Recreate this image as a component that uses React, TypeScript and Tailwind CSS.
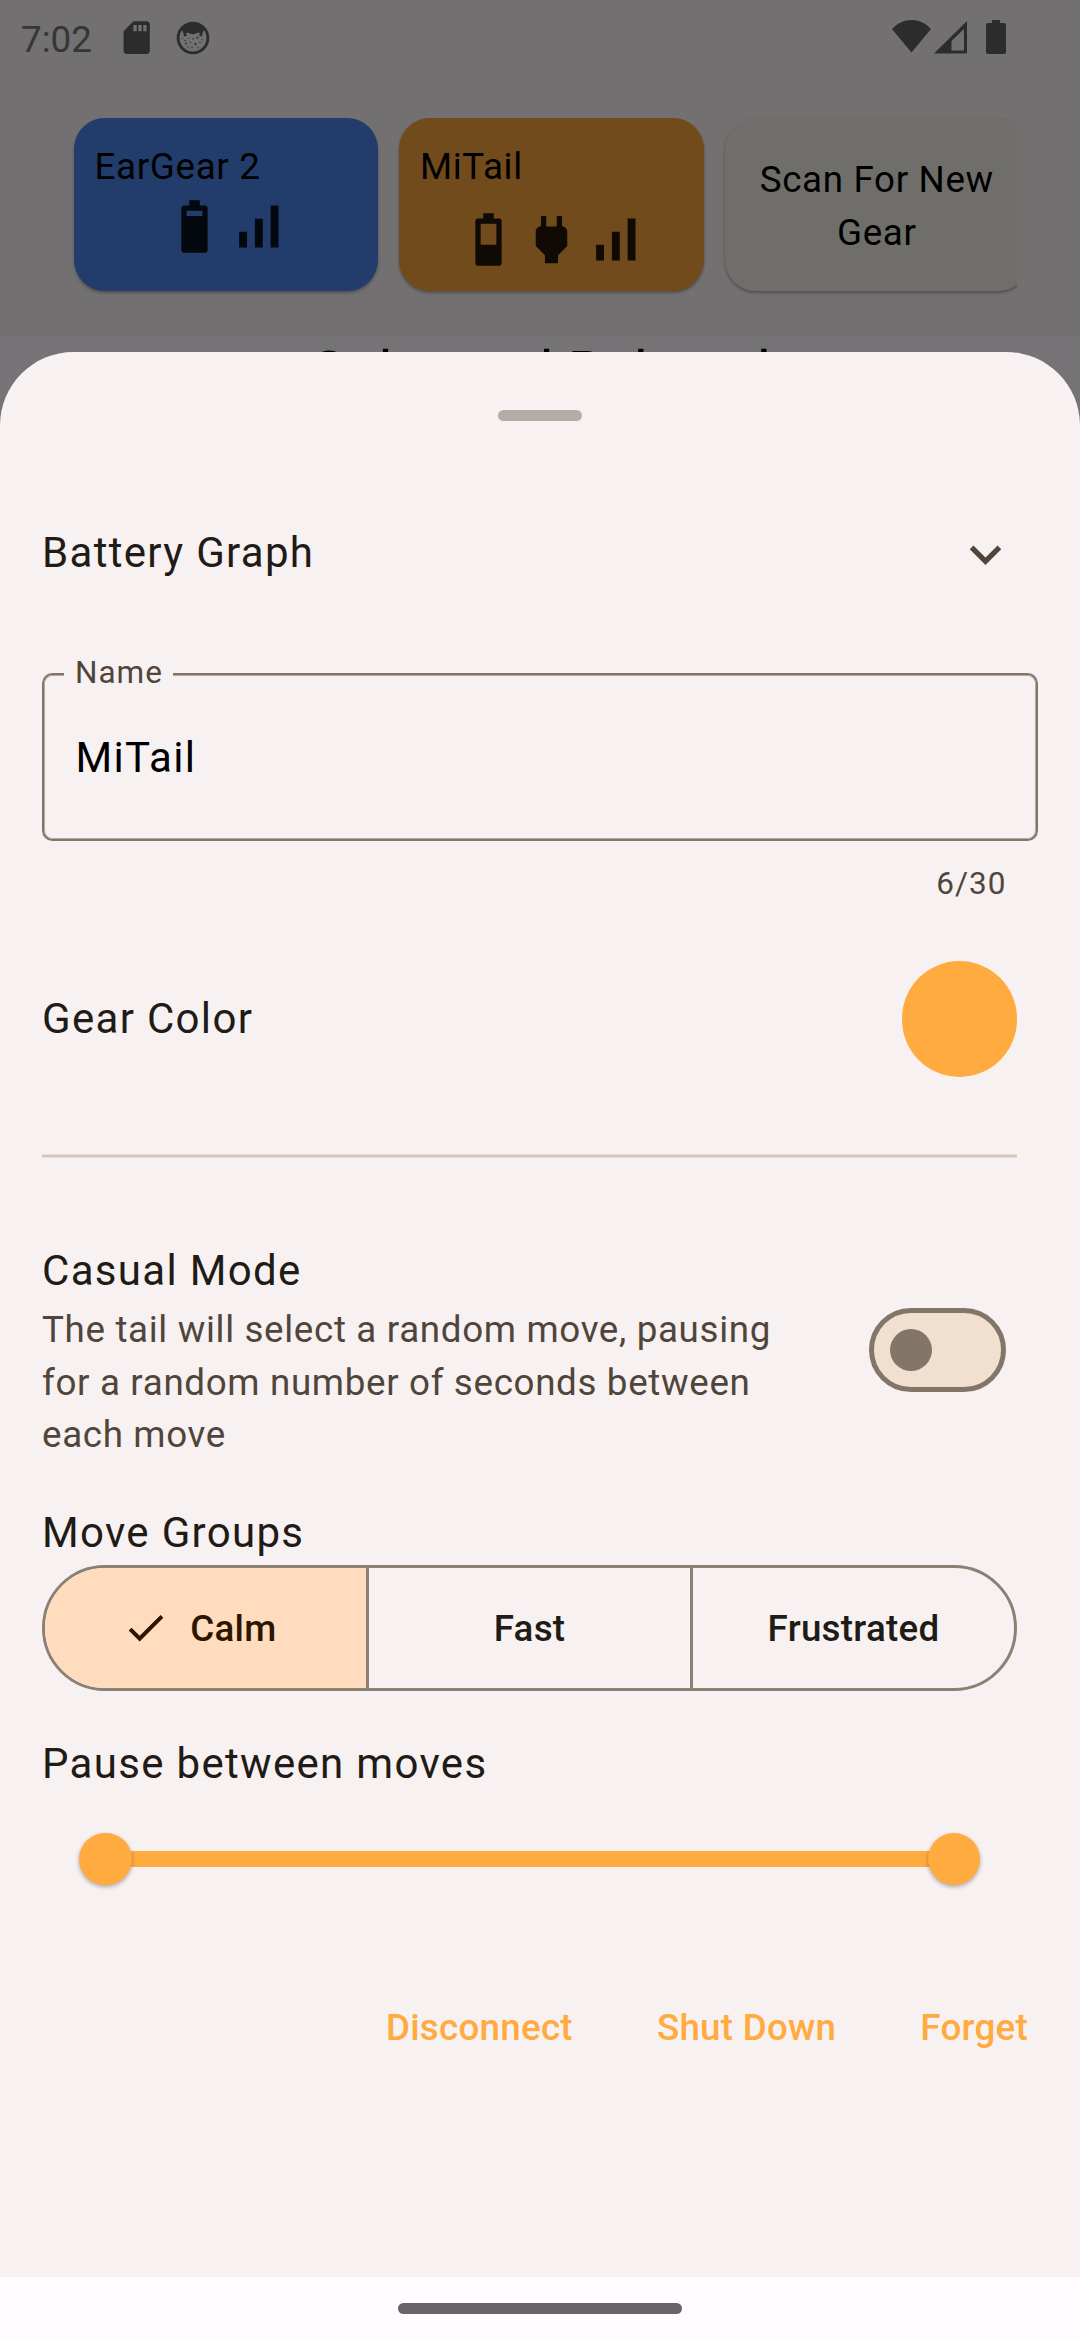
import type { ReactNode } from "react";

const BATTERY_BODY =
  "M17 5v16c0 .55-.45 1-1 1H8c-.55 0-1-.45-1-1V5c0-.55.45-1 1-1h2V2h4v2h2c.55 0 1 .45 1 1z";

function GearIcon({ d, className }: { d: string; className: string }) {
  return (
    <svg viewBox="0 0 24 24" className={`size-[63px] ${className}`} fill="currentColor" fillRule="evenodd">
      <path d={d} />
    </svg>
  );
}

const ICONS = {
  batteryHigh: `${BATTERY_BODY}M15 6H9v2h6V6z`,
  batteryMid: `${BATTERY_BODY}M15 6H9v8h6V6z`,
  power:
    "M16.01 7L16 3h-2v4h-4V3H8v4h-.01C7 6.99 6 7.99 6 8.99v5.49L9.5 18v3h5v-3l3.5-3.51v-5.5c0-1-1-2-1.99-1.99z",
  signal: "M17 4h3v16h-3zM5 14h3v6H5zM11 9h3v11h-3z",
};

function StatusBar() {
  return (
    <div className="flex h-[118px] items-start justify-between pl-[21px] pr-[74px] text-[#2c2c2c]">
      <div className="flex items-start">
        <span className="mt-[18px] w-[96px] text-[36.75px] leading-[44px] text-[#363636]">7:02</span>
        <svg viewBox="0 0 24 24" className="mt-[18px] size-[39.4px]" fill="currentColor" fillRule="evenodd">
          <path d="M18 2h-8L4 8v12c0 1.1.9 2 2 2h12c1.1 0 2-.9 2-2V4c0-1.1-.9-2-2-2zM12 4.200h-2V8h2zM15 4.200h-2V8h2zM18 4.200h-2V8h2z" />
        </svg>
        <svg viewBox="0 0 34 34" className="ml-[20px] mt-[21px] size-[34px]">
          <circle cx="17" cy="17" r="14.9" fill="none" stroke="#2c2c2c" strokeWidth="2.8" />
          <path
            d="M5.500 9C9 0.500 25 0.500 28.500 9L26.800 11L26 15.500L23 14.800L24 12.500L22 11.500C19 13.800 15 13.800 12 11.500L10 12.500L11 14.800L8 15.500L7.200 11Z"
            fill="#2c2c2c"
          />
          <g fill="#3a3939">
            <circle cx="6.500" cy="17.500" r="0.6" />
            <circle cx="9" cy="19.500" r="0.8" />
            <circle cx="13" cy="17.500" r="0.6" />
            <circle cx="17" cy="18" r="0.8" />
            <circle cx="21.500" cy="16.800" r="1.1" />
            <circle cx="26" cy="18.500" r="0.7" />
            <circle cx="10" cy="22.500" r="1.1" />
            <circle cx="14.500" cy="21.500" r="0.8" />
            <circle cx="19.500" cy="23" r="1.2" />
            <circle cx="24" cy="21.500" r="0.8" />
            <circle cx="12" cy="26" r="0.7" />
            <circle cx="16" cy="26.500" r="0.8" />
            <circle cx="22" cy="26.500" r="0.7" />
          </g>
        </svg>
      </div>
      <div className="flex items-start pt-[20px]">
        <svg viewBox="0 0 39 33" className="h-[33px] w-[39px]" fill="currentColor">
          <path d="M19.500 32.500L0 9C11 -3 28 -3 39 9Z" />
        </svg>
        <svg viewBox="0 0 33 33" className="ml-[3px] mt-[1px] h-[33px] w-[33px]" fill="currentColor" fillRule="evenodd">
          <path d="M33 0V32.500H0ZM30 8L17.500 20V29.500H30Z" />
        </svg>
        <svg viewBox="0 0 20 34" className="ml-[19px] h-[34px] w-[20px]" fill="currentColor">
          <path d="M6 0h8v3h4a2 2 0 0 1 2 2v27a2 2 0 0 1-2 2H2a2 2 0 0 1-2-2V5a2 2 0 0 1 2-2h4z" />
        </svg>
      </div>
    </div>
  );
}

function GearCard({ name, className, children }: { name: string; className: string; children: ReactNode }) {
  return (
    <div
      className={`flex h-[173px] w-[304.5px] shrink-0 flex-col rounded-[31px] pt-[22px] shadow-[0_2px_3px_rgba(0,0,0,0.3)] ${className}`}
    >
      <div className="pl-[21px] text-[36.75px] leading-[53px] tracking-[0.656px] text-black">{name}</div>
      {children}
    </div>
  );
}

function Backdrop() {
  return (
    <div className="h-[500px] bg-[#757375]">
      <div className="h-[337px] bg-[#737071]">
        <StatusBar />
        <div className="mr-[63px] flex h-[190px] gap-[21px] overflow-hidden pl-[73.5px]">
          <GearCard name="EarGear 2" className="bg-[#223d6c]">
            <div className="mt-[2px] flex justify-center">
              <GearIcon d={ICONS.batteryHigh} className="text-[#03070e]" />
              <GearIcon d={ICONS.signal} className="text-[#03070e]" />
            </div>
          </GearCard>
          <GearCard name="MiTail" className="bg-[#724b1c]">
            <div className="mt-[15px] flex justify-center">
              <GearIcon d={ICONS.batteryMid} className="text-[#0f0a03]" />
              <GearIcon d={ICONS.power} className="text-[#0f0a03]" />
              <GearIcon d={ICONS.signal} className="text-[#0f0a03]" />
            </div>
          </GearCard>
          <div className="flex h-[173px] w-[304.5px] shrink-0 items-center justify-center rounded-[31px] bg-[#6f6e6b] px-[21px] pt-[2px] text-center text-[36.75px] leading-[53px] tracking-[0.656px] text-black shadow-[0_2px_3px_rgba(0,0,0,0.3)]">
            Scan For New Gear
          </div>
        </div>
      </div>
      <div className="text-center text-[57.75px] leading-[70px] text-black">Calm and Relaxed</div>
    </div>
  );
}

function NameField() {
  return (
    <div className="mx-[42px] mt-[87px] flex flex-col">
      <div className="relative flex h-[168px] items-center rounded-[10.5px] border-2 border-[#837568] pl-[31.5px] shadow-[inset_0_0_0_1px_#b3aaa1]">
        <span className="absolute left-[20px] top-[-23px] w-[109px] bg-[#f8f1f1] pl-[11px] text-[31.5px] leading-[42px] tracking-[1px] text-[#50453a]">
          Name
        </span>
        <span className="text-[42px] leading-[63px] tracking-[1.3125px] text-black">MiTail</span>
      </div>
      <div className="mt-[22px] pr-[31.5px] text-right text-[31.5px] leading-[42px] tracking-[1.05px] text-[#50453a]">
        6/30
      </div>
    </div>
  );
}

function MoveGroups() {
  return (
    <div className="flex h-[126px] overflow-hidden rounded-full border-3 border-[#8c7f73] text-[36.75px] font-medium leading-[53px] tracking-[0.2625px] text-[#1f1b16]">
      <div className="flex w-[321px] items-center bg-[#fedcbd] pl-[77px] text-[#2c1600]">
        <svg viewBox="0 0 24 24" className="size-[47.25px]" fill="currentColor">
          <path d="M9 16.170L4.830 12l-1.420 1.410L9 19 21 7l-1.410-1.410z" />
        </svg>
        <span className="ml-[21px] pt-[2px]">Calm</span>
      </div>
      <div className="flex flex-1 items-center justify-center border-x-3 border-[#8c7f73] pt-[2px]">Fast</div>
      <div className="flex w-[321px] items-center justify-center pt-[2px]">Frustrated</div>
    </div>
  );
}

function PauseSlider() {
  return (
    <div className="mx-[37px] mt-[38px] flex h-[53px] items-center">
      <div className="z-10 size-[52.5px] shrink-0 rounded-full bg-[#ffab40] shadow-[0_2px_4px_rgba(0,0,0,0.3)]" />
      <div className="-mx-[10px] h-[16px] flex-1 bg-[#ffab40]" />
      <div className="z-10 size-[52.5px] shrink-0 rounded-full bg-[#ffab40] shadow-[0_2px_4px_rgba(0,0,0,0.3)]" />
    </div>
  );
}

const TITLE = "text-[42px] tracking-[1.3125px] text-[#1f1b16]";

function GearSheet() {
  return (
    <div className="absolute inset-x-0 bottom-0 top-[352px] flex flex-col rounded-t-[73.5px] bg-[#f8f1f1]">
      <div className="mx-auto mt-[58px] h-[11px] w-[84px] rounded-full bg-[#b4aca6]" />

      <div className="mt-[102px] flex h-[63px] items-start justify-between pl-[42px] pr-[63px]">
        <span className={`${TITLE} leading-[60px]`}>Battery Graph</span>
        <svg viewBox="0 0 24 24" className="size-[63px] text-[#50453a]" fill="currentColor">
          <path d="M16.590 8.590L12 13.170 7.410 8.590 6 10l6 6 6-6z" />
        </svg>
      </div>

      <NameField />

      <div className="ml-[42px] mr-[63px] mt-[56px] flex h-[116px] items-center justify-between">
        <span className={`${TITLE} mb-[2px] leading-[63px]`}>Gear Color</span>
        <div className="size-[115.5px] rounded-full bg-[#ffab40]" />
      </div>

      <div className="ml-[42px] mr-[63px] mt-[77px] h-[4px] shrink-0 border-y border-[#e9dfd7] bg-[#d5c4b5]" />

      <div className="ml-[42px] mr-[63px] mt-[81px] flex items-start justify-between">
        <div className="flex w-[760px] flex-col">
          <span className={`${TITLE} leading-[63px]`}>Casual Mode</span>
          <span className="mt-[2px] text-[36.75px] leading-[52.5px] tracking-[0.656px] text-[#50453a]">
            The tail will select a random move, pausing for a random number of seconds between each move
          </span>
        </div>
        <div className="mr-[11px] mt-[69px] flex h-[84px] w-[137px] items-center rounded-full border-[5.25px] border-[#837568] bg-[#f1e0d0] pl-[16px]">
          <div className="size-[42px] rounded-full bg-[#837568]" />
        </div>
      </div>

      <div className="ml-[42px] mr-[63px] mt-[39px] flex flex-col">
        <span className={`${TITLE} mb-[1px] leading-[63px]`}>Move Groups</span>
        <MoveGroups />
        <span className={`${TITLE} mt-[41px] leading-[63px]`}>Pause between moves</span>
        <PauseSlider />
      </div>

      <div className="mt-[115px] flex justify-end gap-[84px] pr-[52px] text-[36.75px] font-medium leading-[53px] tracking-[0.2625px] text-[#ffab40]">
        <span>Disconnect</span>
        <span>Shut Down</span>
        <span>Forget</span>
      </div>

      <div className="mt-auto flex h-[63px] items-start justify-center bg-[#fffbff] pt-[26px]">
        <div className="h-[11px] w-[284px] rounded-full bg-[#666468]" />
      </div>
    </div>
  );
}

export default function App() {
  return (
    <div className="relative h-[2340px] w-[1080px] overflow-hidden font-[Roboto,sans-serif]">
      <Backdrop />
      <GearSheet />
    </div>
  );
}
